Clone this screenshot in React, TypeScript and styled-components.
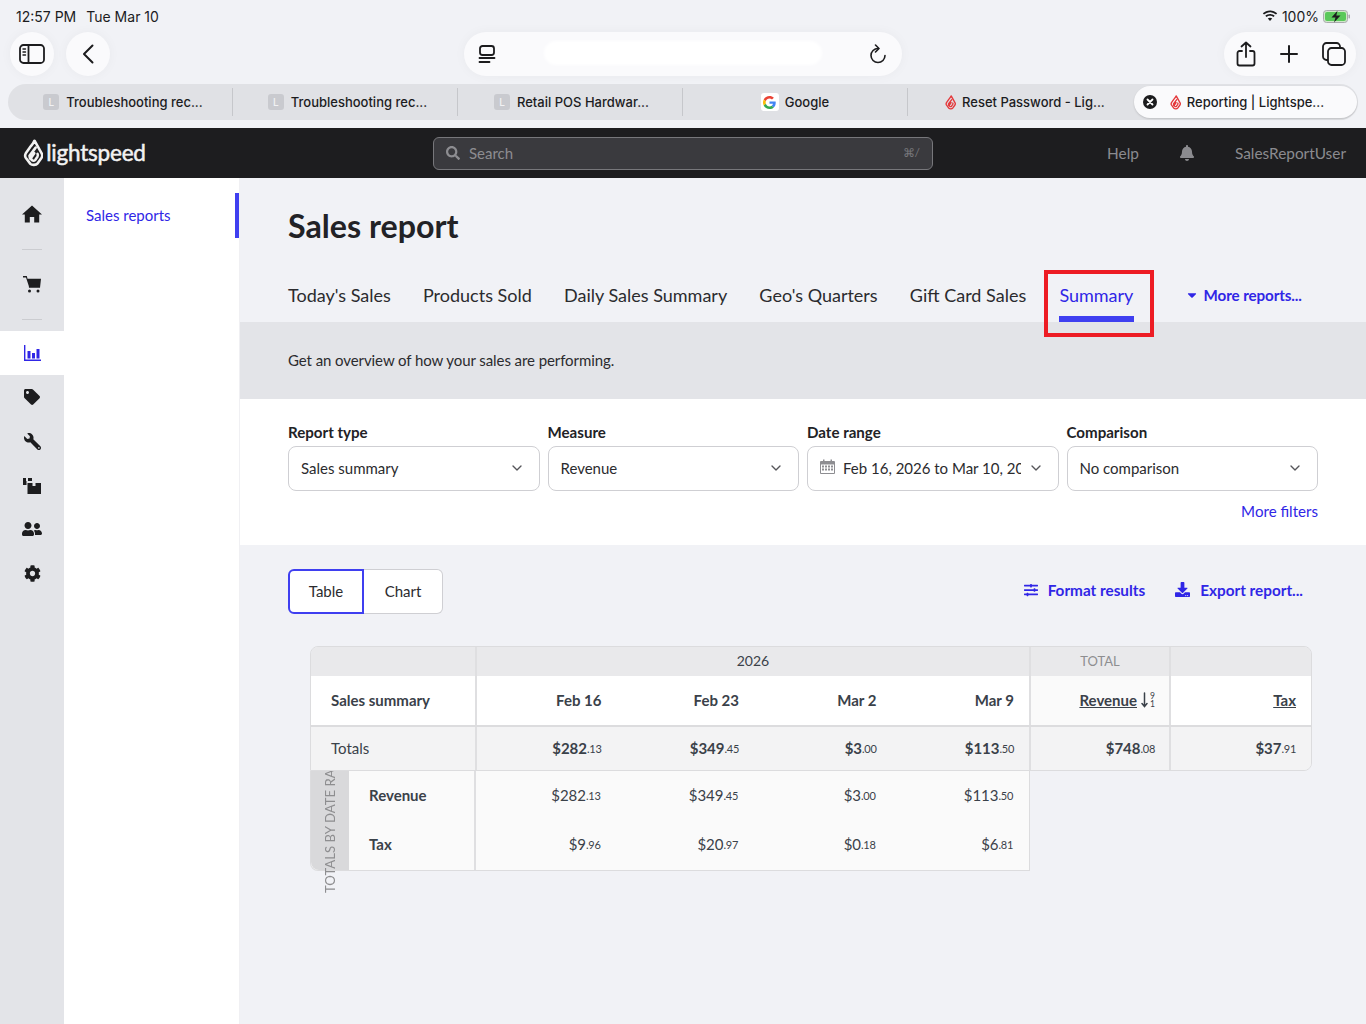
import React from "react";
import styled, { createGlobalStyle } from "styled-components";
import { ChevronDown } from "lucide-react";
import { FaTag, FaWrench, FaUserFriends, FaCog, FaSearch, FaBell, FaSlidersH, FaDownload, FaCaretDown } from "react-icons/fa";

const Global = createGlobalStyle`
  html, body { margin: 0; padding: 0; background: #f1f2f6; }
  body { font-family: Lato, "Liberation Sans", sans-serif; color: #2b2b2e; }
  * { box-sizing: border-box; }
`;

const Page = styled.div`
  width: 1366px; height: 1024px; overflow: hidden; display: flex; flex-direction: column; background: #f1f2f6;
`;

/* ---------- Browser chrome ---------- */
const Chrome = styled.header`
  height: 128px; flex: none; padding: 0 8px; background: #f1f2f6;
  font-family: Inter, "Liberation Sans", sans-serif; color: #1c1c1e;
  display: flex; flex-direction: column;
`;
const StatusBar = styled.div`
  height: 32px; padding: 0 7px 0 8px; display: flex; align-items: center; justify-content: space-between;
  font-size: 14px; font-weight: 400;
`;
const StatusGroup = styled.div<{ $gap: number }>`
  display: flex; align-items: center; gap: ${(p) => p.$gap}px;
`;
const Toolbar = styled.div`
  height: 44px; padding: 0 2px; display: flex; align-items: center;
`;
const ToolGroup = styled.div`
  display: flex; gap: 12px; width: 212px;
`;
const RoundBtn = styled.div`
  width: 44px; height: 44px; border-radius: 50%; background: #fafafc; display: flex; align-items: center; justify-content: center;
  box-shadow: 0 0 12px rgba(0,0,0,0.04);
`;
const UrlPill = styled.div`
  width: 438px; height: 44px; margin-left: 242px; border-radius: 22px; background: #fafafc; position: relative;
  display: flex; align-items: center; justify-content: space-between; padding: 0 15px 0 14px;
  box-shadow: 0 0 12px rgba(0,0,0,0.04);
`;
const UrlMask = styled.div`
  position: absolute; left: 80px; top: 9px; width: 278px; height: 24px; background: #fff; border-radius: 12px; filter: blur(1.5px);
`;
const ActionPill = styled.div`
  width: 132px; height: 44px; margin-left: auto; border-radius: 22px; background: #fafafc; display: flex; align-items: center; justify-content: space-between; padding: 0 10px 0 12px;
  box-shadow: 0 0 12px rgba(0,0,0,0.04);
`;
const TabStrip = styled.div`
  margin-top: 8px; height: 36px; width: 1350px; border-radius: 18px; background: #e0e1e5; display: flex; align-items: center;
  font-size: 13px; font-weight: 500;
`;
const BrowserTab = styled.div<{ $pad?: number; $divider?: boolean }>`
  width: 225px; height: 28px; display: flex; align-items: center; justify-content: center; gap: 6px;
  padding-left: ${(p) => p.$pad ?? 0}px;
  border-right: ${(p) => (p.$divider ? "1px solid #c6c7cb" : "none")}; white-space: nowrap;
`;
const ActiveTab = styled.div`
  width: 223px; height: 32px; margin-left: 1px; border-radius: 16px; background: #fafafc; display: flex; align-items: center; padding-left: 9px; gap: 6px;
  font-size: 13px; font-weight: 500; box-shadow: 0 1px 2px rgba(0,0,0,0.15); white-space: nowrap;
`;
const Favicon = styled.span`
  width: 16px; height: 16px; border-radius: 3px; background: #c9cacf; color: #f2f2f4; font-size: 10px; display: flex; align-items: center; justify-content: center; margin-right: 1px;
`;
const GoogleBox = styled.span`
  width: 18px; height: 18px; border-radius: 3px; background: #fff; display: flex; align-items: center; justify-content: center;
`;
const CloseDot = styled.span`
  width: 14px; height: 14px; border-radius: 50%; background: #1c1c1e; display: flex; align-items: center; justify-content: center; margin-right: 7px;
`;

/* ---------- App top bar ---------- */
const TopBar = styled.div`
  height: 50px; flex: none; background: #1d1d1f; display: flex; align-items: center; padding: 0 20px 0 23px; color: #8b8b8f; font-size: 15px;
`;
const Logo = styled.div`
  width: 410px; display: flex; align-items: center; gap: 3px; color: #f2f2f2; font-size: 22.5px; font-weight: 400; letter-spacing: -0.2px; padding-bottom: 1px;
  -webkit-text-stroke: 0.5px #f2f2f2;
`;
const SearchBox = styled.div`
  width: 500px; height: 33px; border: 1.5px solid #77777b; border-radius: 6px; background: #3a3a3e; display: flex; align-items: center; padding: 0 12px 1px; gap: 9px; color: #8d8d91; font-size: 15px;
`;
const Shortcut = styled.span`
  margin-left: auto; font-size: 12px; color: #77777b;
`;
const TopRight = styled.div`
  margin-left: auto; display: flex; align-items: center; gap: 40px; font-size: 15.4px; padding-bottom: 1px;
`;

/* ---------- Body ---------- */
const Body = styled.div`
  flex: 1; display: flex; min-height: 0;
`;
const IconRail = styled.nav`
  width: 64px; flex: none; background: #e3e4e8; display: flex; flex-direction: column; align-items: center; color: #1d1d1f;
`;
const RailItem = styled.div<{ $h: number; $active?: boolean }>`
  width: 64px; height: ${(p) => p.$h}px; display: flex; align-items: center; justify-content: center;
  background: ${(p) => (p.$active ? "#fff" : "transparent")}; color: ${(p) => (p.$active ? "#3026e6" : "inherit")};
`;
const RailRule = styled.div`
  width: 20px; height: 1px; flex: none; background: #cbccd0;
`;
const FlippedWrench = styled(FaWrench)`
  transform: scaleX(-1);
`;
const SubNav = styled.nav`
  width: 176px; flex: none; background: #fff; padding-top: 15px; border-right: 1px solid #f0f0f3;
`;
const SubNavLink = styled.div`
  height: 45px; padding: 0 0 2px 22px; display: flex; align-items: center; color: #3026e6; font-size: 15px; border-right: 4px solid #3f3ff0;
`;
const Main = styled.main`
  flex: 1; display: flex; flex-direction: column; min-width: 0;
`;
const TitleBlock = styled.div`
  height: 144px; padding: 29px 48px 0; display: flex; flex-direction: column; justify-content: space-between;
`;
const Title = styled.h1`
  margin: 0; font-size: 32.2px; line-height: 38px; font-weight: 700; color: #222226;
`;
const Tabs = styled.div`
  display: flex; gap: 32.2px; align-items: flex-start; height: 52px; padding-top: 14px;
`;
const ReportTab = styled.div<{ $active?: boolean }>`
  position: relative; font-size: 18px; line-height: 22px; white-space: nowrap;
  height: ${(p) => (p.$active ? 38 : 22)}px;
  min-width: ${(p) => (p.$active ? 75 : 0)}px;
  margin-left: ${(p) => (p.$active ? 1 : 0)}px;
  color: ${(p) => (p.$active ? "#3026e6" : "#2b2b2e")};
  border-bottom: ${(p) => (p.$active ? "6px solid #3f3ff0" : "none")};
`;
const Highlight = styled.div`
  position: absolute; left: -15px; right: -20px; top: -14px; height: 67px; border: 4px solid #ed1c24;
`;
const MoreReports = styled.div`
  display: flex; align-items: center; gap: 5px; margin-left: 18px; color: #3026e6; font-size: 15.2px; font-weight: 700; line-height: 22px; letter-spacing: -0.1px;
`;
const Overview = styled.div`
  height: 77px; flex: none; background: #e3e4e8; display: flex; align-items: center; padding: 0 48px 2px; font-size: 15px; letter-spacing: -0.08px; color: #2b2b2e;
`;
const FilterPanel = styled.div`
  height: 146px; flex: none; background: #fff; padding: 23px 48px 0;
`;
const FilterGrid = styled.div`
  display: grid; grid-template-columns: 251.5px 251.5px 251.5px 251.5px; column-gap: 8px; width: 1030px;
`;
const FilterLabel = styled.div`
  font-size: 15.1px; font-weight: 700; line-height: 20px; margin-bottom: 4px; color: #222226;
`;
const Select = styled.div`
  height: 45px; border: 1px solid #cfcfd3; border-radius: 8px; background: #fff; display: flex; align-items: center; padding: 0 14px 2px 12px; font-size: 15px; color: #2b2b2e; white-space: nowrap;
`;
const SelectText = styled.span`
  flex: 1; overflow: hidden; margin-right: 7px;
`;
const MoreFilters = styled.div`
  margin-top: 10px; width: 1030px; text-align: right; color: #3026e6; font-size: 15.1px; line-height: 20px;
`;
const Results = styled.div`
  flex: 1; padding: 24px 48px 0; background: #f1f2f6;
`;
const ResultBar = styled.div`
  display: flex; justify-content: space-between; align-items: center; height: 45px; width: 1015px;
`;
const Segment = styled.div`
  display: flex;
`;
const SegBtn = styled.div<{ $active?: boolean }>`
  height: 45px; display: flex; align-items: center; justify-content: center; font-size: 15px; background: #fff; padding-bottom: 2px;
  width: ${(p) => (p.$active ? 76 : 79)}px;
  border: ${(p) => (p.$active ? "2px solid #3f3ff0" : "1px solid #cfcfd3")};
  border-left: ${(p) => (p.$active ? "2px solid #3f3ff0" : "none")};
  border-radius: ${(p) => (p.$active ? "6px 0 0 6px" : "0 6px 6px 0")};
`;
const Actions = styled.div`
  display: flex; gap: 30px; color: #3026e6; font-size: 15.3px; font-weight: 700; padding-bottom: 4px;
`;
const ActionLink = styled.div`
  display: flex; align-items: center; gap: 10px;
`;

/* ---------- Table ---------- */
const TableWrap = styled.div`
  margin: 32px 0 0 22px; width: 1002px; font-size: 15px; color: #3a4149;
`;
const TableTop = styled.div`
  border: 1px solid #dcdcde; border-radius: 8px 8px 8px 0; overflow: hidden; width: 1002px;
`;
const Row = styled.div<{ $bg: string; $h: number; $rule?: boolean }>`
  display: grid; grid-template-columns: 166px 554px 140px 1fr; height: ${(p) => p.$h}px; background: ${(p) => p.$bg};
  border-bottom: ${(p) => (p.$rule ? "2px solid #dcdcde" : "none")};
`;
const Cell = styled.div<{ $bg?: string; $right?: boolean; $bold?: boolean }>`
  display: flex; align-items: center; justify-content: ${(p) => (p.$right ? "flex-end" : "flex-start")};
  border-right: 2px solid #dfdfe1; padding: ${(p) => (p.$right ? "0 14px 2px 0" : "0 0 2px 20px")};
  font-weight: ${(p) => (p.$bold ? 700 : 400)}; background: ${(p) => p.$bg ?? "transparent"};
  &:last-child { border-right: none; padding-right: 15px; }
`;
const BandCell = styled.div`
  display: flex; align-items: center; justify-content: center; border-right: 2px solid #dfdfe1; padding-bottom: 1px;
  color: #3a4149; font-size: 14px; line-height: 1;
  &:last-child { border-right: none; }
`;
const TotalLabel = styled(BandCell)`
  color: #8e8e90; font-size: 13px;
`;
const Columns = styled.div`
  display: grid; grid-template-columns: 124.5px repeat(3, 137.5px); height: 100%;
`;
const DateCell = styled.div<{ $bold?: boolean }>`
  display: flex; align-items: center; justify-content: flex-end; padding-bottom: 2px;
  font-weight: ${(p) => (p.$bold ? 700 : 400)};
`;
const ColumnsCell = styled.div`
  border-right: 2px solid #dfdfe1;
`;
const SortLink = styled.span`
  text-decoration: underline; font-weight: 700;
`;
const SortIcon = styled.span`
  display: inline-flex; margin-left: 4px;
`;
const Dollars = styled.span<{ $bold?: boolean }>`
  font-size: 15px; font-weight: ${(p) => (p.$bold ? 700 : 400)};
`;
const Cents = styled.span`
  font-size: 11px; font-weight: 400; position: relative; top: -1px; letter-spacing: -0.3px;
`;
const BodyGroup = styled.div`
  display: flex; width: 720px; height: 100px; background: #fafafa; border: 1px solid #dcdcde; border-top: none; border-radius: 0 0 0 8px;
`;
const Band = styled.div`
  width: 38px; flex: none; background: #d9d9db; position: relative; border-radius: 0 0 0 8px;
`;
const BandText = styled.div`
  position: absolute; left: 10px; top: 0; height: 122px; overflow: hidden; writing-mode: vertical-rl; transform: rotate(180deg);
  white-space: nowrap; font-size: 13.2px; line-height: 18px; color: #8e8e90;
`;
const BodyLabels = styled.div`
  width: 127px; flex: none; border-right: 2px solid #dfdfe1; display: flex; flex-direction: column;
`;
const BodyLabel = styled.div`
  flex: 1; display: flex; align-items: center; padding: 0 0 2px 20px; font-weight: 700;
`;
const BodyValues = styled.div`
  flex: 1; display: flex; flex-direction: column;
`;
const BodyRow = styled.div`
  flex: 1; display: grid; grid-template-columns: 124.5px repeat(3, 137.5px);
`;

const Flame = ({ size, color }: { size: number; color: string }) => (
  <svg width={size * 0.72} height={size} viewBox="0 0 18 25" fill="none" stroke={color} strokeWidth="2.300" strokeLinejoin="round" strokeLinecap="round">
    <path d="M10.300 1.500 16.800 13c.6 1.200.5 2.500-.2 3.700L12.800 22c-1 1.300-4.900 1.500-6.200.2l-4-5.200c-.9-1.300-.9-2.800-.1-4.200l3.800-5.500c1.800-2 3.300-3.700 3.900-5.800z" />
    <path d="M6.300 17.500 5.800 15 11.300 7.700M13 13.300c.5.900.4 1.700-.1 2.500l-2 2.900c-.9 1.100-2.500 1-3.300-.1-.5-.8-.4-1.600 0-2.300l2.500-3.600" />
  </svg>
);
const GoogleG = () => (
  <svg width="13" height="13" viewBox="0 0 48 48">
    <path fill="#EA4335" d="M24 9.500c3.500 0 6.700 1.200 9.200 3.600l6.900-6.900C35.900 2.400 30.500 0 24 0 14.600 0 6.500 5.400 2.600 13.200l8 6.200C12.400 13.700 17.700 9.500 24 9.500z" />
    <path fill="#4285F4" d="M47 24.500c0-1.600-.1-3.100-.4-4.500H24v9h13c-.6 3-2.300 5.500-4.800 7.200l7.700 6c4.500-4.200 7.100-10.300 7.100-17.700z" />
    <path fill="#FBBC05" d="M10.600 28.600c-.5-1.400-.8-3-.8-4.600s.3-3.200.8-4.600l-8-6.200C.9 16.500 0 20.100 0 24s.9 7.500 2.600 10.800l8-6.200z" />
    <path fill="#34A853" d="M24 48c6.500 0 11.900-2.100 15.900-5.800l-7.700-6c-2.100 1.400-4.900 2.300-8.200 2.300-6.300 0-11.600-4.200-13.400-9.900l-8 6.200C6.500 42.600 14.600 48 24 48z" />
  </svg>
);
const IconStroke = ({ w, h, view, children }: { w: number; h: number; view: string; children: React.ReactNode }) => (
  <svg width={w} height={h} viewBox={view} fill="none" stroke="#1c1c1e" strokeWidth="1.8" strokeLinecap="round" strokeLinejoin="round">{children}</svg>
);

const Money = ({ v, c, bold }: { v: string; c: string; bold?: boolean }) => (
  <span><Dollars $bold={bold}>{v}</Dollars><Cents>{c}</Cents></span>
);

const totals = [["$282", ".13"], ["$349", ".45"], ["$3", ".00"], ["$113", ".50"]];
const revenue = totals;
const tax = [["$9", ".96"], ["$20", ".97"], ["$0", ".18"], ["$6", ".81"]];
const dates = ["Feb 16", "Feb 23", "Mar 2", "Mar 9"];
const reportTabs = ["Today's Sales", "Products Sold", "Daily Sales Summary", "Geo's Quarters", "Gift Card Sales"];
const filters = [
  { label: "Report type", value: "Sales summary" },
  { label: "Measure", value: "Revenue" },
  { label: "Date range", value: "Feb 16, 2026 to Mar 10, 2026", calendar: true },
  { label: "Comparison", value: "No comparison" },
];

export default function App() {
  return (
    <Page>
      <Global />
      <Chrome>
        <StatusBar>
          <StatusGroup $gap={10}><span>12:57 PM</span><span>Tue Mar 10</span></StatusGroup>
          <StatusGroup $gap={4}>
            <svg width="16" height="12" viewBox="0 0 16 12" fill="#1c1c1e"><path d="M8 2.200c2.300 0 4.400.9 6 2.400l1.200-1.300C13.300 1.500 10.800.4 8 .4S2.700 1.500.8 3.300L2 4.600c1.600-1.500 3.700-2.400 6-2.400z" /><path d="M8 5.700c1.300 0 2.500.5 3.500 1.400l1.200-1.300C11.500 4.700 9.800 4 8 4s-3.500.7-4.700 1.800l1.200 1.300c1-.9 2.200-1.400 3.500-1.400z" /><path d="M8 7.700c-.9 0-1.600.3-2.200.9L8 11l2.200-2.400c-.6-.6-1.300-.9-2.200-.9z" /></svg>
            <span>100%</span>
            <svg width="28" height="13" viewBox="0 0 28 13"><rect x="0.500" y="0.500" width="24" height="12" rx="3" fill="#cfe8c8" stroke="#a9a9ad" /><rect x="2" y="2" width="21" height="9" rx="2" fill="#5ac85a" /><rect x="25.500" y="4.500" width="1.500" height="4" rx="0.700" fill="#a9a9ad" /><path d="M14.500 0.800 8.500 7.400h4l-1.500 5 6.500-7h-4.200z" fill="#1c1c1e" /></svg>
          </StatusGroup>
        </StatusBar>
        <Toolbar>
          <ToolGroup>
            <RoundBtn>
              <IconStroke w={26} h={20} view="0 0 26 20">
                <rect x="1" y="1" width="24" height="18" rx="3.500" />
                <path d="M9.500 1v18" />
                <path d="M4 5h2.500M4 8h2.500M4 11h2.500" strokeWidth="1.400" />
              </IconStroke>
            </RoundBtn>
            <RoundBtn>
              <IconStroke w={12} h={20} view="0 0 12 20">
                <path d="M10.500 1.500 2 10l8.500 8.500" strokeWidth="2" />
              </IconStroke>
            </RoundBtn>
          </ToolGroup>
          <UrlPill>
            <IconStroke w={18} h={18} view="0 0 18 18">
              <rect x="2" y="1" width="14" height="9" rx="2.500" />
              <path d="M1.500 13h15M1.500 17h10" />
            </IconStroke>
            <UrlMask />
            <IconStroke w={18} h={21} view="0 0 18 21">
              <path d="M9 4.500a7 7 0 1 0 7 7" strokeWidth="1.600" />
              <path d="M6.500 1 10 4.500 6.500 8" strokeWidth="1.600" />
            </IconStroke>
          </UrlPill>
          <ActionPill>
            <IconStroke w={20} h={26} view="0 0 20 26">
              <path d="M6 10H3.500a2 2 0 0 0-2 2v10.500a2 2 0 0 0 2 2h13a2 2 0 0 0 2-2V12a2 2 0 0 0-2-2H14" />
              <path d="M10 16V1.500M5.500 5.500 10 1.500l4.500 4" />
            </IconStroke>
            <IconStroke w={18} h={18} view="0 0 18 18">
              <path d="M9 1v16M1 9h16" strokeWidth="2" />
            </IconStroke>
            <IconStroke w={24} h={24} view="0 0 24 24">
              <rect x="1" y="1" width="17" height="17" rx="3.500" />
              <rect x="6" y="6" width="17" height="17" rx="3.500" fill="#fafafc" />
            </IconStroke>
          </ActionPill>
        </Toolbar>
        <TabStrip>
          <BrowserTab $divider $pad={6}><Favicon>L</Favicon>Troubleshooting rec...</BrowserTab>
          <BrowserTab $divider $pad={5}><Favicon>L</Favicon>Troubleshooting rec...</BrowserTab>
          <BrowserTab $divider $pad={3}><Favicon>L</Favicon>Retail POS Hardwar...</BrowserTab>
          <BrowserTab $divider><GoogleBox><GoogleG /></GoogleBox>Google</BrowserTab>
          <BrowserTab $pad={9}><Flame size={15} color="#e4393c" />Reset Password - Lig...</BrowserTab>
          <ActiveTab>
            <CloseDot>
              <svg width="8" height="8" viewBox="0 0 8 8" stroke="#fff" strokeWidth="1.800" strokeLinecap="round"><path d="M1.500 1.500l5 5M6.500 1.500l-5 5" /></svg>
            </CloseDot>
            <Flame size={15} color="#e4393c" />
            <span>Reporting | Lightspe...</span>
          </ActiveTab>
        </TabStrip>
      </Chrome>

      <TopBar>
        <Logo><Flame size={28} color="#f2f2f2" /><span>lightspeed</span></Logo>
        <SearchBox><FaSearch size={14} /><span>Search</span><Shortcut>⌘/</Shortcut></SearchBox>
        <TopRight>
          <span>Help</span>
          <FaBell size={16} />
          <span>SalesReportUser</span>
        </TopRight>
      </TopBar>

      <Body>
        <IconRail>
          <RailItem $h={71}>
            <svg width="20" height="18" viewBox="0 0 20 18" fill="currentColor"><path d="M10 .5 20 9.500h-2.800V17.500h-5v-5.500h-4.400v5.500h-5V9.500H0z" /></svg>
          </RailItem>
          <RailRule />
          <RailItem $h={69}>
            <svg width="18" height="17" viewBox="0 0 18 17" fill="currentColor"><path d="M0 0h3.800l.7 2.700H18l-1 9H6l-.2-1.700L3 1.500H0z" /><circle cx="6.500" cy="15" r="1.500" /><circle cx="15" cy="15" r="1.500" /></svg>
          </RailItem>
          <RailRule />
          <RailItem $h={11} />
          <RailItem $h={44} $active>
            <svg width="17" height="16" viewBox="0 0 17 16" fill="currentColor"><path d="M0 0h1.400v14.400H17V16H0z" /><rect x="3.500" y="6" width="3" height="7.500" /><rect x="8" y="8" width="3" height="5.500" /><rect x="12.500" y="4" width="3" height="9.500" /></svg>
          </RailItem>
          <RailItem $h={44}><FaTag size={16} /></RailItem>
          <RailItem $h={44}><FlippedWrench size={17} /></RailItem>
          <RailItem $h={44}>
            <svg width="18" height="17" viewBox="0 0 18 17" fill="currentColor"><path d="M0 1h3v3h2V1h4v3H3.500v4H0zM4.500 6h5v3h3V6H18v11H4.500z" /></svg>
          </RailItem>
          <RailItem $h={44}><FaUserFriends size={20} /></RailItem>
          <RailItem $h={44}><FaCog size={17} /></RailItem>
        </IconRail>
        <SubNav><SubNavLink>Sales reports</SubNavLink></SubNav>
        <Main>
          <TitleBlock>
            <Title>Sales report</Title>
            <Tabs>
              {reportTabs.map((t) => <ReportTab key={t}>{t}</ReportTab>)}
              <ReportTab $active>Summary<Highlight /></ReportTab>
              <MoreReports><FaCaretDown size={14} />More reports...</MoreReports>
            </Tabs>
          </TitleBlock>
          <Overview>Get an overview of how your sales are performing.</Overview>
          <FilterPanel>
            <FilterGrid>
              {filters.map((f) => (
                <div key={f.label}>
                  <FilterLabel>{f.label}</FilterLabel>
                  <Select>
                    {f.calendar && (
                      <svg width="15" height="15" viewBox="0 0 15 15" fill="#8d8d91" style={{ marginRight: 8, marginBottom: 3 }}>
                        <path d="M1 2h2V0.500h1.500V2h6V0.500H12V2h2a1 1 0 0 1 1 1v11a1 1 0 0 1-1 1H1a1 1 0 0 1-1-1V3a1 1 0 0 1 1-1zm0 3.500V14h13V5.500zm1 1h2v2H2zm3 0h2v2H5zm3 0h2v2H8zm3 0h2v2h-2zm-9 3h2v2H2zm3 0h2v2H5zm3 0h2v2H8zm3 0h2v2h-2z" fillRule="evenodd" />
                      </svg>
                    )}
                    <SelectText>{f.value}</SelectText>
                    <ChevronDown size={16} color="#55555a" />
                  </Select>
                </div>
              ))}
            </FilterGrid>
            <MoreFilters>More filters</MoreFilters>
          </FilterPanel>
          <Results>
            <ResultBar>
              <Segment>
                <SegBtn $active>Table</SegBtn>
                <SegBtn>Chart</SegBtn>
              </Segment>
              <Actions>
                <ActionLink><FaSlidersH size={14} />Format results</ActionLink>
                <ActionLink><FaDownload size={15} />Export report...</ActionLink>
              </Actions>
            </ResultBar>
            <TableWrap>
              <TableTop>
                <Row $bg="#e9e9eb" $h={29}>
                  <BandCell />
                  <BandCell>2026</BandCell>
                  <TotalLabel>TOTAL</TotalLabel>
                  <BandCell />
                </Row>
                <Row $bg="#fff" $h={51} $rule>
                  <Cell $bold>Sales summary</Cell>
                  <ColumnsCell>
                    <Columns>{dates.map((d) => <DateCell key={d} $bold>{d}</DateCell>)}</Columns>
                  </ColumnsCell>
                  <Cell $right $bg="#fafafa"><SortLink>Revenue</SortLink>
                    <SortIcon>
                      <svg width="14" height="18" viewBox="0 0 14 18" fill="none" stroke="#3a4149" strokeWidth="1.500" strokeLinecap="round"><path d="M3.500 2v13M1 12.500 3.500 15.500 6 12.500" /><text x="9" y="7.500" fontSize="8.500" stroke="none" fill="#3a4149" fontFamily="Lato">9</text><text x="9" y="16" fontSize="8.500" stroke="none" fill="#3a4149" fontFamily="Lato">1</text></svg>
                    </SortIcon>
                  </Cell>
                  <Cell $right><SortLink>Tax</SortLink></Cell>
                </Row>
                <Row $bg="#f3f3f4" $h={43}>
                  <Cell>Totals</Cell>
                  <ColumnsCell>
                    <Columns>{totals.map(([v, c]) => <DateCell key={v}><Money v={v} c={c} bold /></DateCell>)}</Columns>
                  </ColumnsCell>
                  <Cell $right><Money v="$748" c=".08" bold /></Cell>
                  <Cell $right><Money v="$37" c=".91" bold /></Cell>
                </Row>
              </TableTop>
              <BodyGroup>
                <Band><BandText>TOTALS BY DATE RANGE</BandText></Band>
                <BodyLabels>
                  <BodyLabel>Revenue</BodyLabel>
                  <BodyLabel>Tax</BodyLabel>
                </BodyLabels>
                <BodyValues>
                  <BodyRow>{revenue.map(([v, c]) => <DateCell key={v}><Money v={v} c={c} /></DateCell>)}</BodyRow>
                  <BodyRow>{tax.map(([v, c]) => <DateCell key={v}><Money v={v} c={c} /></DateCell>)}</BodyRow>
                </BodyValues>
              </BodyGroup>
            </TableWrap>
          </Results>
        </Main>
      </Body>
    </Page>
  );
}
